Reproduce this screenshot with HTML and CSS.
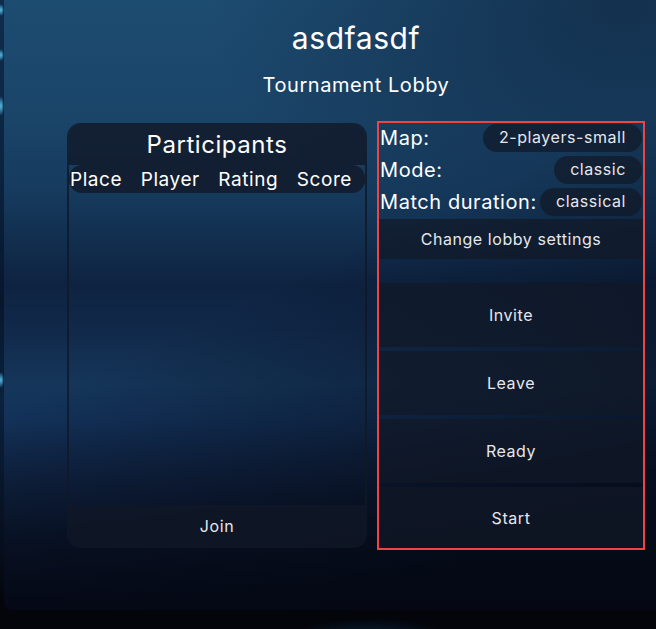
FILE: index.html
```html
<!DOCTYPE html>
<html lang="en">
<head>
<meta charset="utf-8">
<title>Tournament Lobby</title>
<link rel="stylesheet" href="styles.css">
</head>
<body>
<div class="scene">
  <main class="panel">
    <h1 class="title">asdfasdf</h1>
    <h2 class="subtitle">Tournament Lobby</h2>
    <div class="lobby">
      <section class="participants">
        <header class="participants-head">Participants</header>
        <div class="columns">
          <span>Place</span>
          <span>Player</span>
          <span>Rating</span>
          <span>Score</span>
        </div>
        <div class="participants-body"></div>
        <button class="join">Join</button>
      </section>
      <section class="controls">
        <div class="setting">
          <span class="setting-label">Map:</span>
          <span class="pill">2-players-small</span>
        </div>
        <div class="setting">
          <span class="setting-label">Mode:</span>
          <span class="pill">classic</span>
        </div>
        <div class="setting">
          <span class="setting-label">Match duration:</span>
          <span class="pill">classical</span>
        </div>
        <button class="btn btn-settings">Change lobby settings</button>
        <div class="actions">
          <button class="btn btn-action">Invite</button>
          <button class="btn btn-action">Leave</button>
          <button class="btn btn-action">Ready</button>
          <button class="btn btn-action btn-last">Start</button>
        </div>
      </section>
    </div>
  </main>
</div>
</body>
</html>
```
FILE: styles.css
```css
* { box-sizing: border-box; }

html, body {
  margin: 0;
  height: 100%;
}

body {
  overflow: hidden;
  font-family: "Inter", "Noto Sans", sans-serif;
  letter-spacing: 0.035em;
  color: #ffffff;
  background-color: #03050b;
  background-image:
    radial-gradient(ellipse 80px 22px at 370px 640px, rgba(20, 80, 130, 0.4), transparent 100%),
    radial-gradient(ellipse 3px 6px at 1px 10px, #58c4f0, transparent),
    radial-gradient(ellipse 3px 6px at 1px 55px, #58c4f0, transparent),
    radial-gradient(ellipse 3px 10px at 1px 106px, #58c4f0, transparent),
    radial-gradient(ellipse 3px 8px at 1px 380px, #58c4f0, transparent),
    linear-gradient(to bottom, #0e2d4c 0, #0b2541 150px, #08162c 300px, #0b213c 400px, #060c1a 560px, #03050b 600px);
  background-size: 100% 100%, 4px 100%, 4px 100%, 4px 100%, 4px 100%, 4px 100%;
  background-repeat: no-repeat;
}

.scene {
  padding-left: 4px;
  height: 100%;
}

.panel {
  width: 100%;
  height: 610px;
  border-bottom-left-radius: 8px;
  padding: 16px 0 0 52px;
  display: flex;
  flex-direction: column;
  align-items: center;
  background-color: #0f2442;
  background-image:
    linear-gradient(155deg, transparent 45%, rgba(4, 7, 18, 0.75) 85%),
    radial-gradient(ellipse 420px 260px at 620px 0px, rgba(12, 26, 50, 0.55), transparent),
    linear-gradient(to bottom,
      #1d4c71 0px,
      #1a4468 120px,
      #163b5e 190px,
      #0e2341 285px,
      #11294a 330px,
      #15365a 385px,
      #13325a 420px,
      #0f2240 480px,
      #091428 545px,
      #060a18 610px);
}

.title {
  margin: 0;
  font-size: 30px;
  font-weight: 400;
  line-height: 45px;
}

.subtitle {
  margin: 9px 0 0;
  font-size: 20px;
  font-weight: 400;
  line-height: 30px;
}

.lobby {
  margin-top: 21px;
  display: flex;
  gap: 10px;
  align-items: flex-start;
}

/* Participants */
.participants {
  width: 300px;
  height: 425px;
  margin-top: 2px;
  display: flex;
  flex-direction: column;
  border: 2px solid rgba(17, 24, 39, 0.8);
  border-top: 0;
  border-radius: 14px;
  overflow: hidden;
}

.participants-head {
  height: 42px;
  margin: 0 -2px;
  background: rgba(17, 24, 39, 0.8);
  font-size: 24px;
  line-height: 44px;
  text-align: center;
}

.columns {
  height: 28px;
  display: flex;
  justify-content: space-between;
  align-items: center;
  padding: 0 13px 0 1px;
  border-radius: 13px;
  background: rgba(17, 24, 39, 0.8);
  font-size: 19px;
}

.participants-body {
  flex: 1;
}

.join {
  height: 41px;
  flex: none;
  border: 0;
  background: rgba(17, 24, 39, 0.7);
  color: #e5e7eb;
  font-family: inherit;
  letter-spacing: inherit;
  font-size: 16px;
  padding: 0;
}

/* Controls */
.controls {
  width: 268px;
  height: 429px;
  border: 2px solid #ef4444;
  padding: 1px 1px 0;
  display: flex;
  flex-direction: column;
}

.setting {
  height: 28px;
  display: flex;
  justify-content: space-between;
  align-items: center;
  margin-bottom: 4px;
}

.setting-label {
  font-size: 20px;
  line-height: 28px;
}

.pill {
  height: 28px;
  line-height: 27px;
  padding: 0 16px;
  border-radius: 14px;
  background: rgba(17, 24, 39, 0.7);
  color: #e5e7eb;
  font-size: 16px;
}

.btn {
  border: 0;
  padding: 0;
  margin: 0 -1px;
  background: rgba(17, 24, 39, 0.7);
  color: #e5e7eb;
  font-family: inherit;
  letter-spacing: inherit;
  font-size: 16px;
}

.btn-settings {
  height: 40px;
  margin-top: -1px;
}

.actions {
  margin-top: 24px;
  display: flex;
  flex-direction: column;
  gap: 4px;
}

.btn-action {
  height: 64px;
}

.btn-last {
  height: 61px;
}
```
